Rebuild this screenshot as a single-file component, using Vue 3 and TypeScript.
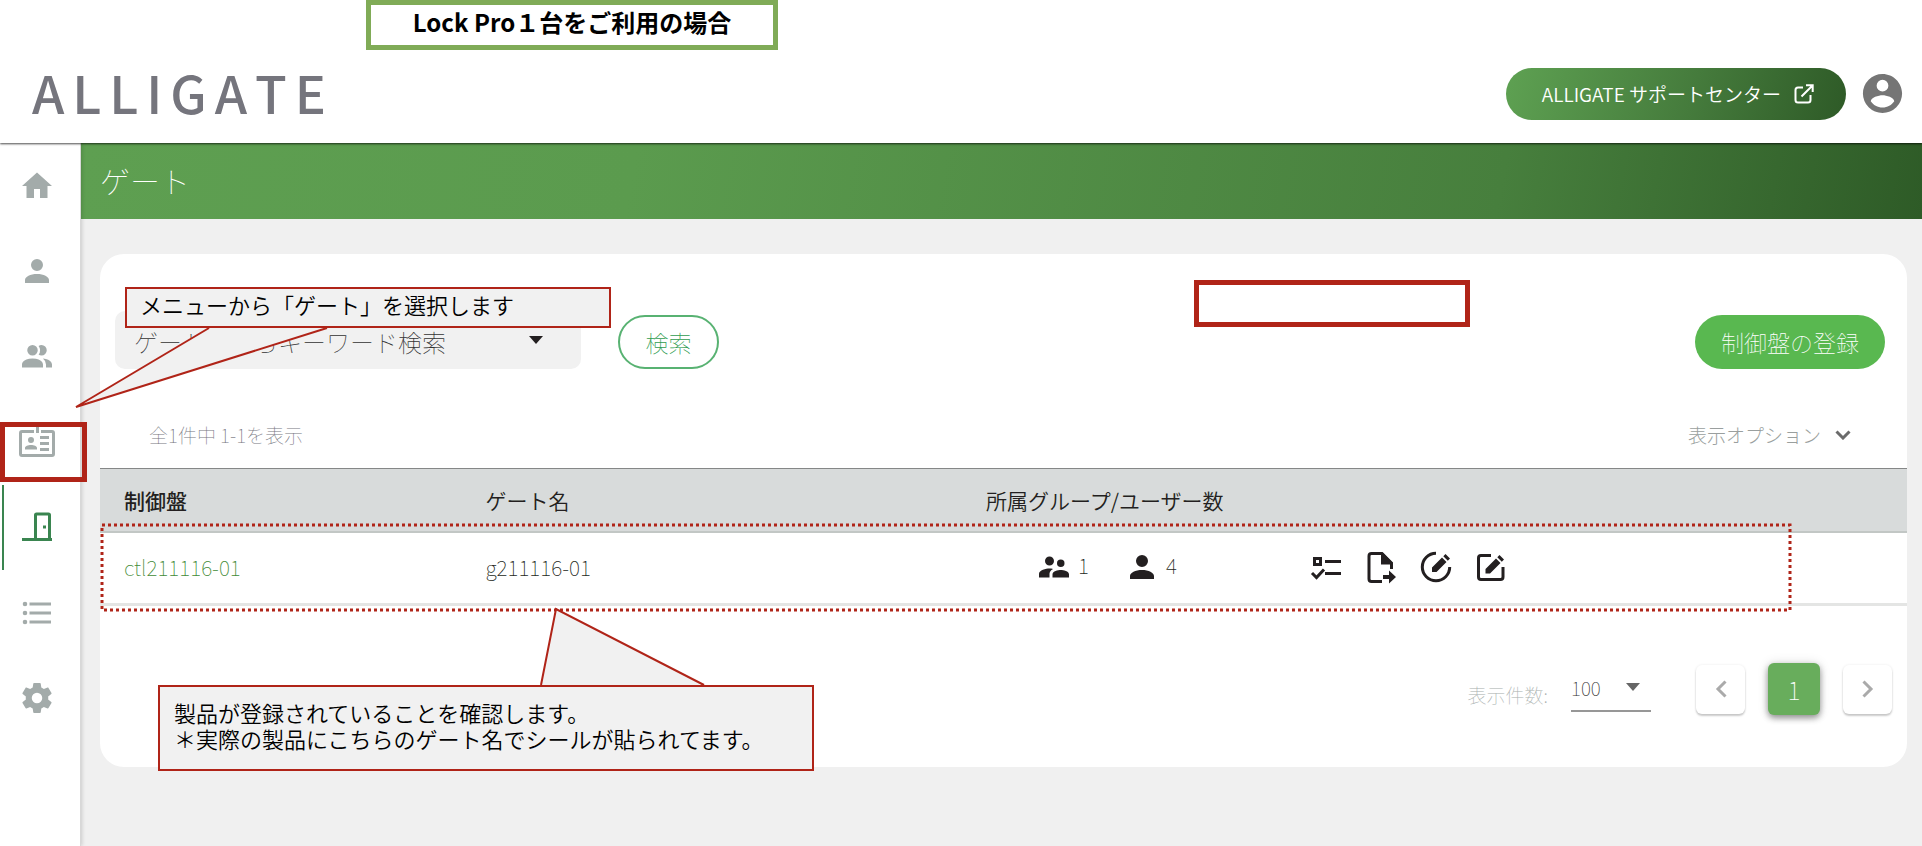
<script setup lang="ts">
import { ref } from 'vue'

interface NavItem {
  label: string
  viewBox: string
  path: string
  active?: boolean
}

const navItems: NavItem[] = [
  { label: 'ホーム', viewBox: '0 0 24 24', path: 'M10 20V14H14V20H19V12H22L12 3L2 12H5V20H10Z' },
  {
    label: 'ユーザー',
    viewBox: '0 0 24 24',
    path: 'M12 4A4 4 0 0 1 16 8A4 4 0 0 1 12 12A4 4 0 0 1 8 8A4 4 0 0 1 12 4M12 14C16.42 14 20 15.79 20 18V20H4V18C4 15.79 7.58 14 12 14Z',
  },
  {
    label: 'グループ',
    viewBox: '0 0 24 24',
    path: 'M16 17V19H2V17S2 13 9 13 16 17 16 17M12.5 7.5A3.5 3.5 0 1 0 9 11A3.5 3.5 0 0 0 12.5 7.5M15.94 13A5.32 5.32 0 0 1 18 17V19H22V17S22 13.37 15.94 13M15 4A3.39 3.39 0 0 0 13.07 4.59A5 5 0 0 1 13.07 10.41A3.39 3.39 0 0 0 15 11A3.5 3.5 0 0 0 15 4Z',
  },
  {
    label: 'カード',
    viewBox: '0 0 36 36',
    path: 'M3 6H15V9H3V30H33V9H22V6H33Q36 6 36 9V30Q36 33 33 33H3Q0 33 0 30V9Q0 6 3 6ZM17 2H20V9H17ZM12 13A3 3 0 0 1 12 19A3 3 0 0 1 12 13M6 25.500V24C6 22 9 21 12 21S18 22 18 24V25.500ZM21 12H30V15H21ZM21 18H30V21H21ZM21 24H30V27H21Z',
  },
  {
    label: 'ゲート',
    viewBox: '0 0 36 36',
    path: 'M3 29H15V6Q15 3.500 17.500 3.500H29.500Q32 3.500 32 6V29H33V32H3ZM18 6.500V29H29V6.500ZM24 16.500H27V19.500H24Z',
    active: true,
  },
  {
    label: '履歴',
    viewBox: '0 0 36 36',
    path: 'M6 6.700A2.300 2.300 0 0 1 6 11.300A2.300 2.300 0 0 1 6 6.700M6 15.700A2.300 2.300 0 0 1 6 20.300A2.300 2.300 0 0 1 6 15.700M6 24.700A2.300 2.300 0 0 1 6 29.300A2.300 2.300 0 0 1 6 24.700M10.500 7.500H32V10.500H10.500ZM10.500 16.500H32V19.500H10.500ZM10.500 25.500H32V28.500H10.500Z',
  },
  {
    label: '設定',
    viewBox: '0 0 24 24',
    path: 'M12,15.5A3.5,3.5 0 0,1 8.5,12A3.5,3.5 0 0,1 12,8.5A3.5,3.5 0 0,1 15.5,12A3.5,3.5 0 0,1 12,15.5M19.43,12.97C19.47,12.65 19.5,12.33 19.5,12C19.5,11.67 19.47,11.34 19.43,11L21.54,9.37C21.73,9.22 21.78,8.95 21.66,8.73L19.66,5.27C19.54,5.05 19.27,4.96 19.05,5.05L16.56,6.05C16.04,5.66 15.5,5.32 14.87,5.07L14.5,2.42C14.46,2.18 14.25,2 14,2H10C9.75,2 9.54,2.18 9.5,2.42L9.13,5.07C8.5,5.32 7.96,5.66 7.44,6.05L4.95,5.05C4.73,4.96 4.46,5.05 4.34,5.27L2.34,8.73C2.21,8.95 2.27,9.22 2.46,9.37L4.57,11C4.53,11.34 4.5,11.67 4.5,12C4.5,12.33 4.53,12.65 4.57,12.97L2.46,14.63C2.27,14.78 2.21,15.05 2.34,15.27L4.34,18.73C4.46,18.95 4.73,19.03 4.95,18.95L7.44,17.94C7.96,18.34 8.5,18.68 9.13,18.93L9.5,21.58C9.54,21.82 9.75,22 10,22H14C14.25,22 14.46,21.82 14.5,21.58L14.87,18.93C15.5,18.67 16.04,18.34 16.56,17.94L19.05,18.95C19.27,19.03 19.54,18.95 19.66,18.73L21.66,15.27C21.78,15.05 21.73,14.78 21.54,14.63L19.43,12.97Z',
  },
]

const gates = [{ controller: 'ctl211116-01', name: 'g211116-01', groups: 1, users: 4 }]
const keyword = ref('')
const perPage = ref('100')
</script>

<template>
  <div class="page">
    <header class="topbar">
      <a class="logo" href="#" aria-label="ALLIGATE">
        <span v-for="(letter, i) in 'ALLIGATE'" :key="i">{{ letter }}</span>
      </a>
      <div class="top-actions">
        <a class="support" href="#">
          ALLIGATE サポートセンター
          <svg class="external" viewBox="0 0 20 20" aria-hidden="true">
            <path d="M9 3.500H4Q1.500 3.500 1.500 6V16Q1.500 18.500 4 18.500H14Q16.500 18.500 16.500 16V11M7.500 12.500L18 2M12 1.300H18.700V8" />
          </svg>
        </a>
        <button class="avatar" type="button" aria-label="アカウント">
          <svg viewBox="0 0 24 24">
            <path d="M12,19.2C9.5,19.2 7.29,17.92 6,16C6.03,14 10,12.9 12,12.9C14,12.9 17.97,14 18,16C16.71,17.92 14.5,19.2 12,19.2M12,5A3,3 0 0,1 15,8A3,3 0 0,1 12,11A3,3 0 0,1 9,8A3,3 0 0,1 12,5M12,2A10,10 0 0,0 2,12A10,10 0 0,0 12,22A10,10 0 0,0 22,12C22,6.47 17.5,2 12,2Z" />
          </svg>
        </button>
      </div>
    </header>

    <div class="body">
      <nav class="sidebar">
        <a v-for="item in navItems" :key="item.label" href="#" :class="{ active: item.active }" :aria-label="item.label">
          <svg :viewBox="item.viewBox"><path fill-rule="evenodd" :d="item.path" /></svg>
        </a>
      </nav>

      <main class="content">
        <h1 class="title">ゲート</h1>
        <section class="card">
          <form class="search-row" @submit.prevent>
            <div class="field">
              <input v-model="keyword" type="text" placeholder="ゲート名からキーワード検索" aria-label="ゲート名からキーワード検索" />
              <svg class="caret" viewBox="0 0 14 8" aria-hidden="true"><path d="M0 0H14L7 8Z" /></svg>
            </div>
            <button class="search" type="submit">検索</button>
            <button class="register" type="button">制御盤の登録</button>
          </form>

          <div class="meta-row">
            <span class="count">全1件中 1-1を表示</span>
            <button class="options" type="button">
              表示オプション
              <svg viewBox="0 0 16 10" aria-hidden="true"><path d="M1.500 1.500L8 8L14.500 1.500" /></svg>
            </button>
          </div>

          <table>
            <colgroup>
              <col class="c1" /><col class="c2" /><col class="c3" /><col />
            </colgroup>
            <thead>
              <tr>
                <th class="strong">制御盤</th>
                <th>ゲート名</th>
                <th>所属グループ/ユーザー数</th>
                <th></th>
              </tr>
            </thead>
            <tbody>
              <tr v-for="g in gates" :key="g.name">
                <td><a href="#">{{ g.controller }}</a></td>
                <td>{{ g.name }}</td>
                <td>
                  <div class="counts">
                    <svg viewBox="0 0 24 24" aria-hidden="true">
                      <path d="M16.5,12A2.5,2.5 0 0,0 19,9.5A2.5,2.5 0 0,0 16.5,7A2.5,2.5 0 0,0 14,9.5A2.5,2.5 0 0,0 16.5,12M9,11A3,3 0 0,0 12,8A3,3 0 0,0 9,5A3,3 0 0,0 6,8A3,3 0 0,0 9,11M16.5,14C14.67,14 11,14.92 11,16.75V19H22V16.75C22,14.92 18.33,14 16.5,14M9,13C6.67,13 2,14.17 2,16.5V19H9V16.75C9,15.9 9.33,14.41 11.37,13.28C10.5,13.1 9.66,13 9,13Z" />
                    </svg>
                    <span>{{ g.groups }}</span>
                    <svg viewBox="0 0 24 24" aria-hidden="true"><path :d="navItems[1].path" /></svg>
                    <span>{{ g.users }}</span>
                  </div>
                </td>
                <td>
                  <div class="actions">
                    <button type="button" aria-label="チェックリスト">
                      <svg viewBox="0 0 36 36">
                        <path d="M5 8H14V17H5ZM8 11V14H11V11ZM17 11H33V14H17ZM17 23H33V26H17Z" fill-rule="evenodd" />
                        <path class="line" d="M4 24L8.500 28.500L16 20.500" />
                      </svg>
                    </button>
                    <button type="button" aria-label="書き出し">
                      <svg viewBox="0 0 36 36">
                        <path class="line" d="M19 32.500H8.500Q6 32.500 6 30V7Q6 4.500 8.500 4.500H19L28.500 14V20" />
                        <path d="M18 4H20L30 14V15.500H18ZM20 26H26V21.500L33 28L26 34.500V30H20Z" />
                      </svg>
                    </button>
                    <button type="button" aria-label="状態を編集">
                      <svg viewBox="0 0 36 36">
                        <path class="line" d="M18 4.300A13.700 13.700 0 1 0 31.700 18" />
                        <path d="M14 23V18.500L24 8.500L28.500 13L18.500 23ZM25.300 7.200L27.500 5L32 9.500L29.800 11.700Z" />
                      </svg>
                    </button>
                    <button type="button" aria-label="編集">
                      <svg viewBox="0 0 36 36">
                        <path class="line" d="M18 6.500H8Q5.500 6.500 5.500 9V28Q5.500 30.500 8 30.500H27.500Q30 30.500 30 28V18" />
                        <path d="M12.500 24.500V20L23 9.500L27.500 14L17 24.500ZM24.300 8.200L26.500 6L31 10.500L28.800 12.700Z" />
                      </svg>
                    </button>
                  </div>
                </td>
              </tr>
            </tbody>
          </table>

          <footer class="pager">
            <label for="per-page">表示件数:</label>
            <div class="per-page">
              <select id="per-page" v-model="perPage">
                <option>100</option>
              </select>
              <svg class="caret" viewBox="0 0 14 8" aria-hidden="true"><path d="M0 0H14L7 8Z" /></svg>
            </div>
            <div class="pages">
              <button type="button" aria-label="前のページ">
                <svg viewBox="0 0 12 18"><path d="M10.500 1.500L3 9L10.500 16.500" /></svg>
              </button>
              <button class="current" type="button" aria-current="page">1</button>
              <button type="button" aria-label="次のページ">
                <svg viewBox="0 0 12 18"><path d="M1.500 1.500L9 9L1.500 16.500" /></svg>
              </button>
            </div>
          </footer>
        </section>
      </main>
    </div>

    <div class="note-title">Lock Pro１台をご利用の場合</div>
    <div class="mark mark-nav"></div>
    <div class="mark mark-top"></div>
    <svg class="dotted" aria-hidden="true"><rect width="100%" height="100%" /></svg>

    <div class="callout callout-nav">
      <svg class="tail" viewBox="0 0 260 84" aria-hidden="true">
        <path d="M139 2L6 81L257 2" />
      </svg>
      <p>メニューから「ゲート」を選択します</p>
    </div>
    <div class="callout callout-row">
      <svg class="tail" viewBox="0 0 170 82" aria-hidden="true">
        <path d="M3 80L18 4L166 80" />
      </svg>
      <p>製品が登録されていることを確認します。</p>
      <p>＊実際の製品にこちらのゲート名でシールが貼られてます。</p>
    </div>
  </div>
</template>

<style>
body {
  margin: 0;
  background: #f0f0f0;
}
</style>

<style scoped>
.page {
  position: relative;
  display: flex;
  flex-direction: column;
  min-height: 100vh;
  overflow: hidden;
  color: #231f20;
  font-family: 'Noto Sans CJK JP', sans-serif;
  font-weight: 300;
}
.page * {
  box-sizing: border-box;
}
button,
input,
select {
  margin: 0;
  padding: 0;
  border: 0;
  background: none;
  color: inherit;
  font: inherit;
}
a {
  color: inherit;
  text-decoration: none;
}
svg {
  display: block;
  flex: none;
  fill: currentColor;
}

.topbar {
  position: relative;
  z-index: 2;
  display: flex;
  align-items: center;
  justify-content: space-between;
  height: 143px;
  padding: 44px 16px 0 32px;
  background: #fff;
  box-shadow: 0 1px 2px rgba(0, 0, 0, 0.7);
}
.logo {
  display: flex;
  justify-content: space-between;
  width: 294px;
  padding-bottom: 3px;
  color: #75757d;
  font-size: 52px;
  font-weight: 500;
  line-height: 60px;
}
.top-actions {
  display: flex;
  align-items: center;
  gap: 13px;
}
.support {
  display: flex;
  align-items: center;
  gap: 13px;
  height: 52px;
  padding: 0 32px 0 36px;
  border-radius: 26px;
  background: linear-gradient(105deg, #5ea152, #457b3c 55%, #2e5a27);
  color: #fff;
  font-size: 19px;
  font-weight: 350;
}
.external {
  width: 20px;
  height: 20px;
  fill: none;
  stroke: currentColor;
  stroke-width: 2;
}
.avatar svg {
  width: 47px;
  height: 47px;
  color: #757575;
}

.body {
  display: flex;
  flex: 1;
}
.sidebar {
  position: relative;
  z-index: 1;
  display: grid;
  grid-template-rows: repeat(7, 1fr);
  flex: none;
  width: 81px;
  padding-bottom: 105px;
  background: #fff;
  border-right: 1px solid #d8d8d8;
  box-shadow: 1px 0 4px rgba(0, 0, 0, 0.16);
}
.sidebar a {
  display: flex;
  align-items: center;
  margin-left: 2px;
  padding-left: 15px;
  border-left: 2px solid transparent;
  color: #a3abaa;
}
.sidebar a.active {
  border-color: #3a8550;
  color: #3a8550;
}
.sidebar svg {
  width: 36px;
  height: 36px;
}

.content {
  flex: 1;
  min-width: 0;
}
.title {
  display: flex;
  align-items: center;
  height: 76px;
  margin: 0;
  padding: 0 0 3px 19px;
  background: linear-gradient(100deg, #5e9f51, #5b9b4e 30%, #477f3d 77%, #2e5b27);
  color: #fff;
  font-size: 30px;
  font-weight: 100;
}
.card {
  margin: 35px 15px 0 19px;
  padding: 57px 0 52px;
  border-radius: 24px;
  background: #fff;
}
.search-row {
  display: flex;
  align-items: flex-end;
  padding: 0 22px 0 15px;
}
.field {
  display: flex;
  align-items: center;
  width: 466px;
  height: 58px;
  padding: 0 38px 0 19px;
  border-radius: 10px;
  background: #f1f1f1;
}
.field input {
  flex: 1;
  min-width: 0;
  height: 100%;
  padding-top: 2px;
  outline: 0;
  font-size: 24px;
  font-weight: 100;
}
.field input::placeholder {
  color: #333;
  opacity: 1;
}
.caret {
  width: 14px;
  height: 8px;
}
.search,
.register {
  height: 54px;
  border-radius: 27px;
  font-size: 23px;
  font-weight: 100;
}
.search {
  width: 101px;
  margin-left: 37px;
  border: 2px solid #58b272;
  color: #2f9c50;
}
.register {
  width: 190px;
  margin-left: auto;
  background: #59b850;
  color: #fff;
}
.meta-row {
  display: flex;
  align-items: center;
  justify-content: space-between;
  height: 99px;
  padding: 32px 56px 0 49px;
}
.count {
  color: #77777f;
  font-size: 19px;
  font-weight: 100;
}
.options {
  display: flex;
  align-items: center;
  gap: 14px;
  color: #9a9f9e;
  font-size: 19px;
}
.options svg {
  width: 16px;
  height: 10px;
  fill: none;
  stroke: #6b6b6b;
  stroke-width: 3;
}

table {
  width: 100%;
  border-collapse: collapse;
  table-layout: fixed;
  font-size: 21px;
}
.c1 {
  width: 20%;
}
.c2 {
  width: 27.7%;
}
.c3 {
  width: 17.8%;
}
th,
td {
  padding: 0 0 0 24px;
  text-align: left;
}
th {
  height: 63px;
  background: #d8dbdb;
  border-top: 1px solid #858787;
  border-bottom: 2px solid #c2c7c5;
  font-weight: 350;
}
th.strong {
  font-weight: 500;
}
td {
  height: 73px;
  padding-bottom: 2px;
  border-bottom: 3px solid #e4e5e4;
  font-weight: 100;
}
td a {
  color: #3f8a35;
}
.counts,
.actions {
  display: flex;
  align-items: center;
}
.counts {
  gap: 6px;
  padding-left: 50px;
}
.counts span {
  padding-bottom: 4px;
}
.counts span + svg {
  margin-left: 29px;
}
.counts svg,
.actions svg {
  width: 36px;
  height: 36px;
}
.actions {
  gap: 19px;
}
.line {
  fill: none;
  stroke: currentColor;
  stroke-width: 3;
}

.pager {
  display: flex;
  align-items: center;
  justify-content: flex-end;
  margin-top: 57px;
  padding-right: 15px;
}
.pager label {
  padding-top: 10px;
  color: #a9afae;
  font-size: 19px;
  font-weight: 100;
}
.per-page {
  display: flex;
  align-items: center;
  width: 80px;
  height: 46px;
  margin-left: 23px;
  padding: 0 11px 2px 0;
  border-bottom: 2px solid #979797;
  color: #666;
}
.per-page select {
  flex: 1;
  min-width: 0;
  appearance: none;
  color: #333;
  font-size: 19px;
  font-weight: 100;
}
.pages {
  display: flex;
  align-items: center;
  gap: 23px;
  margin-left: 45px;
}
.pages button {
  display: flex;
  align-items: center;
  justify-content: center;
  width: 49px;
  height: 49px;
  border-radius: 6px;
  background: #fff;
  box-shadow: 0 2px 2px rgba(0, 0, 0, 0.2), 0 0 3px rgba(0, 0, 0, 0.08);
  color: #aaa;
}
.pages svg {
  width: 12px;
  height: 18px;
  fill: none;
  stroke: currentColor;
  stroke-width: 3;
}
.pages .current {
  width: 52px;
  height: 52px;
  background: #68ad5c;
  box-shadow: 0 3px 6px rgba(0, 0, 0, 0.4), 0 0 12px rgba(0, 0, 0, 0.12);
  color: #fff;
  font-size: 25px;
  font-weight: 100;
}

.note-title,
.mark,
.dotted,
.callout {
  position: absolute;
  z-index: 3;
}
.note-title {
  top: 0;
  left: 366px;
  width: 412px;
  height: 50px;
  border: 5px solid #80ab57;
  background: #fff;
  color: #000;
  font-size: 24px;
  font-weight: 700;
  line-height: 34px;
  text-align: center;
}
.mark {
  border: 5px solid #b02418;
}
.mark-nav {
  top: 422px;
  left: 0;
  width: 87px;
  height: 60px;
}
.mark-top {
  top: 280px;
  left: 1194px;
  width: 276px;
  height: 47px;
}
.dotted {
  top: 525px;
  left: 102px;
  width: 1688px;
  height: 85px;
  overflow: visible;
  fill: none;
  stroke: #b02418;
  stroke-width: 3;
  stroke-dasharray: 3 3;
}
.callout {
  border: 2px solid #b02418;
  background: #f1f1f1;
  color: #000;
  font-size: 22px;
  font-weight: 350;
}
.callout p {
  margin: 0;
}
.callout-nav {
  top: 287px;
  left: 125px;
  width: 486px;
  height: 41px;
  padding: 0 13px;
  line-height: 30px;
}
.callout-row {
  top: 685px;
  left: 158px;
  width: 656px;
  height: 86px;
  padding: 12px 14px;
  line-height: 26px;
}
.tail {
  position: absolute;
  fill: #f1f1f1;
  stroke: #b02418;
  stroke-width: 2;
}
.callout-nav .tail {
  top: 37px;
  left: -57px;
  width: 260px;
  height: 84px;
}
.callout-row .tail {
  bottom: 82px;
  left: 378px;
  width: 170px;
  height: 82px;
}
</style>
